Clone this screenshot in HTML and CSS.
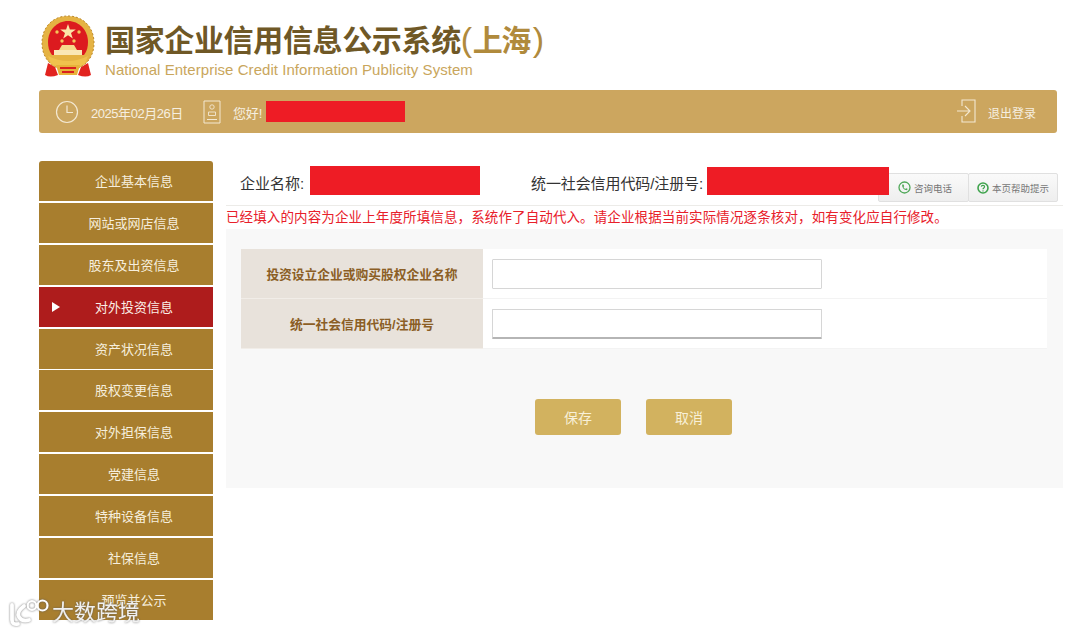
FILE: index.html
```html
<!DOCTYPE html>
<html lang="zh-CN">
<head>
<meta charset="utf-8">
<title>国家企业信用信息公示系统(上海)</title>
<link rel="stylesheet" href="styles.css">
</head>
<body>
<header class="brand">
  <svg class="emblem" width="54" height="64" viewBox="0 0 54 64" aria-hidden="true">
    <path d="M7 48 L4 60 Q9 63 17 60 L14 52Z M47 48 L50 60 Q45 63 37 60 L40 52Z" fill="#e2231f"/>
    <path d="M27 1 C42 1 53 12 53 28 C53 44 42 55 27 55 C12 55 1 44 1 28 C1 12 12 1 27 1Z" fill="#e5b343"/>
    <path d="M27 1 C42 1 53 12 53 28 C53 44 42 55 27 55 C12 55 1 44 1 28 C1 12 12 1 27 1Z" fill="none" stroke="#bd8a2c" stroke-width="1" stroke-dasharray="2 2"/>
    <path d="M27 6 C38 6 47 15 47 27 C47 32 46 36 43 40 H11 C8 36 7 32 7 27 C7 15 16 6 27 6Z" fill="#dc1a1f"/>
    <polygon points="27,9 28.900,14.600 34.800,14.600 30,18 31.800,23.600 27,20.200 22.200,23.600 24,18 19.200,14.600 25.100,14.600" fill="#fbe6a8"/>
    <circle cx="16" cy="17" r="1.700" fill="#f4c65a"/>
    <circle cx="38" cy="17" r="1.700" fill="#f4c65a"/>
    <circle cx="21" cy="26" r="1.700" fill="#f4c65a"/>
    <circle cx="33" cy="26" r="1.700" fill="#f4c65a"/>
    <path d="M18 35 L21 30 H33 L36 35Z" fill="#f6d98a"/>
    <rect x="13" y="35" width="28" height="5" fill="#fae7b5"/>
    <path d="M7 41 Q27 51 47 41 L44 49 Q27 58 10 49Z" fill="#f0c24d"/>
    <path d="M15 50 H39 L36 60 H18Z" fill="#e8b23a"/>
    <path d="M19 53 H35 M21 57 H33" stroke="#d9201f" stroke-width="2"/>
  </svg>
  <div class="brand-text">
    <h1 class="brand-title">国家企业信用信息公示系统<span class="brand-region"><span class="paren paren-open">(</span><span class="region-name">上海</span><span class="paren paren-close">)</span></span></h1>
    <p class="brand-en">National Enterprise Credit Information Publicity System</p>
  </div>
</header>

<div class="topbar">
  <div class="topbar-left">
    <svg class="icon-clock" width="24" height="24" viewBox="0 0 24 24" aria-hidden="true">
      <circle cx="12" cy="12" r="10.500" fill="none" stroke="#f3e8d2" stroke-width="1.200"/>
      <path d="M12 5.500V12.500H18" fill="none" stroke="#f3e8d2" stroke-width="1.200"/>
    </svg>
    <span class="date">2025年02月26日</span>
    <svg class="icon-user" width="18" height="24" viewBox="0 0 18 24" aria-hidden="true">
      <path d="M1 1H17V23H1Z M4 19.500H14" fill="none" stroke="#f3e8d2" stroke-width="1"/>
      <circle cx="9" cy="7" r="2.200" fill="none" stroke="#f3e8d2" stroke-width=".9"/>
      <path d="M5.500 15.500V12H12.500V15.500Z" fill="none" stroke="#f3e8d2" stroke-width=".9"/>
    </svg>
    <span class="hello">您好!</span>
    <span class="redact redact-user"></span>
  </div>
  <div class="logout">
    <svg width="20" height="24" viewBox="0 0 20 24" aria-hidden="true">
      <path d="M5 7V1H18V23H5V17" fill="none" stroke="#f3e8d2" stroke-width="1.100"/>
      <path d="M0 12H12M8 7L13 12L8 17" fill="none" stroke="#f3e8d2" stroke-width="1.100"/>
    </svg>
    <span>退出登录</span>
  </div>
</div>

<div class="layout">
  <nav class="sidebar">
    <a class="nav-item first">企业基本信息</a>
    <a class="nav-item">网站或网店信息</a>
    <a class="nav-item">股东及出资信息</a>
    <a class="nav-item active">对外投资信息</a>
    <a class="nav-item">资产状况信息</a>
    <a class="nav-item">股权变更信息</a>
    <a class="nav-item">对外担保信息</a>
    <a class="nav-item">党建信息</a>
    <a class="nav-item">特种设备信息</a>
    <a class="nav-item">社保信息</a>
    <a class="nav-item">预览并公示</a>
  </nav>

  <main class="content">
    <div class="company-row">
      <span class="label label-name">企业名称:</span>
      <span class="redact redact-name"></span>
      <span class="label label-code">统一社会信用代码/注册号:</span>
      <span class="redact redact-code"></span>
      <div class="help-tabs">
        <span class="help-tab tab-phone">
          <svg width="13" height="13" viewBox="0 0 13 13" aria-hidden="true">
            <circle cx="6.500" cy="6.500" r="5.500" fill="none" stroke="#4fa858" stroke-width="1.300"/>
            <path d="M4.200 3.500C3.800 6.500 6 9.200 9.200 9.200L9.500 7.800L8 7.200L7.300 7.900C6.500 7.500 5.800 6.700 5.500 5.900L6.200 5.200L5.600 3.500Z" fill="#4fa858"/>
          </svg>咨询电话</span>
        <span class="help-tab tab-help">
          <svg width="12" height="12" viewBox="0 0 12 12" aria-hidden="true">
            <circle cx="6" cy="6" r="5" fill="none" stroke="#3fa34d" stroke-width="1.600"/>
            <path d="M4.300 4.600C4.500 3 7.600 3 7.600 4.800C7.600 6 6 5.900 6 7.200" fill="none" stroke="#3fa34d" stroke-width="1.200"/>
            <circle cx="6" cy="8.900" r=".7" fill="#3fa34d"/>
          </svg>本页帮助提示</span>
      </div>
    </div>
    <p class="notice">已经填入的内容为企业上年度所填信息，系统作了自动代入。请企业根据当前实际情况逐条核对，如有变化应自行修改。</p>

    <section class="panel">
      <div class="form-table">
        <div class="form-label">投资设立企业或购买股权企业名称</div>
        <div class="form-cell"><input class="text-input" type="text"></div>
        <div class="form-label">统一社会信用代码/注册号</div>
        <div class="form-cell"><input class="text-input input-shadow" type="text"></div>
      </div>
      <div class="actions">
        <button class="btn" type="button">保存</button>
        <button class="btn" type="button">取消</button>
      </div>
    </section>
  </main>
</div>

<div class="watermark">
  <svg class="wm-logo" width="42" height="28" viewBox="0 0 42 28" aria-hidden="true">
    <path d="M3 6V21Q3 26 9 25" fill="none" stroke="#fff" stroke-width="3.800" stroke-linecap="round"/>
    <path d="M15 7Q7 13 10 18Q13 23 20 21" fill="none" stroke="#fff" stroke-width="3.800" stroke-linecap="round"/>
    <circle cx="23" cy="6.500" r="4.300" fill="none" stroke="#fff" stroke-width="2.200"/>
    <circle cx="33.500" cy="6.500" r="5" fill="none" stroke="#fff" stroke-width="2.200"/>
  </svg>
  <span class="wm-text">大数跨境</span>
</div>
</body>
</html>
```
FILE: styles.css
```css
* { box-sizing: border-box; }
html, body { margin: 0; padding: 0; }
body {
  width: 1080px;
  height: 633px;
  overflow: hidden;
  background: #fff;
  position: relative;
  font-family: "Liberation Sans", "Noto Sans CJK SC", sans-serif;
}

.brand {
  height: 90px;
  padding: 15px 0 0 41px;
  display: flex;
  align-items: flex-start;
  gap: 10px;
}
.emblem { flex: none; }
.brand-text { padding-top: 8px; }
.brand-title {
  margin: 0;
  font-size: 30px;
  line-height: 36px;
  font-weight: 700;
  color: #6f5826;
  letter-spacing: -.35px;
  white-space: nowrap;
}
.brand-region { color: #b08a3c; }
.paren { font-weight: 400; font-size: 34px; line-height: 30px; }
.paren-open { margin-right: 1px; }
.paren-close { margin-left: 3px; }
.region-name { letter-spacing: -1.500px; }
.brand-en {
  margin: 2px 0 0;
  font-size: 15px;
  line-height: 17px;
  color: #c9a65c;
  letter-spacing: .05px;
  white-space: nowrap;
}

.topbar {
  margin: 0 23px 0 39px;
  height: 43px;
  background: #cca65f;
  border-radius: 3px;
  display: flex;
  justify-content: space-between;
  align-items: center;
  color: #f6efe0;
  font-size: 12px;
}
.topbar-left { display: flex; align-items: center; padding-left: 16px; }
.date { margin: 2px 0 0 12px; font-size: 13px; letter-spacing: -.45px; }
.icon-user { margin-left: 20px; }
.hello { margin: 2px 0 0 12px; font-size: 13px; letter-spacing: -.1px; }
.redact { display: block; background: #ee1c25; flex: none; }
.redact-user { width: 139px; height: 21px; margin-left: 4px; }
.logout { display: flex; align-items: center; gap: 11px; padding-right: 21px; }
.logout svg { margin-top: -1px; }
.logout span { margin-top: 1px; }

.layout {
  display: flex;
  align-items: flex-start;
  padding: 28px 17px 0 39px;
  gap: 13px;
}
.sidebar { width: 174px; flex: none; display: flex; flex-direction: column; gap: 1.9px; }
.nav-item {
  height: 40px;
  background: #a87e2e;
  color: #f6eedd;
  font-size: 13px;
  line-height: 41px;
  padding-left: 16px;
  text-align: center;
  position: relative;
}
.nav-item.first { border-radius: 3px 3px 0 0; }
.nav-item.active { background: #ae1c1c; color: #fbeee6; }
.nav-item.active::before {
  content: "";
  position: absolute;
  left: 13px;
  top: 15px;
  border-left: 8px solid #fff;
  border-top: 5px solid transparent;
  border-bottom: 5px solid transparent;
}

.content { width: 837px; flex: none; }
.company-row {
  display: flex;
  align-items: flex-start;
  height: 40px;
  border-bottom: 1px solid #ecebe8;
  padding-left: 14px;
  margin-top: 5px;
  position: relative;
  color: #333;
  font-size: 15px;
}
.label { line-height: 32px; white-space: nowrap; margin-top: 2px; }
.label-name { width: 70px; }
.redact-name { width: 170px; height: 29px; }
.label-code { margin-left: 51px; width: 176px; letter-spacing: -.1px; }
.redact-code { width: 182px; height: 28px; margin-top: 1px; position: relative; z-index: 1; }
.help-tabs { position: absolute; right: 5px; top: 7px; display: flex; }
.help-tab {
  height: 29px;
  display: flex;
  align-items: center;
  justify-content: center;
  gap: 3px;
  font-size: 9.500px;
  color: #777;
  background: linear-gradient(#fafafa, #eeeeee);
  border: 1px solid #e0e0e0;
  border-radius: 2px;
  white-space: nowrap;
}
.tab-phone { width: 91px; padding-left: 3px; }
.tab-help { width: 90px; margin-left: -1px; }
.notice {
  margin: 0;
  height: 23px;
  line-height: 23px;
  font-size: 13.500px;
  color: #e8202a;
  white-space: nowrap;
  letter-spacing: .12px;
}

.panel {
  background: #f8f8f8;
  height: 259px;
  padding: 20px 16px 0 15px;
}
.form-table {
  display: grid;
  grid-template-columns: 242px 1fr;
  grid-auto-rows: 50px;
  background: #fff;
}
.form-label {
  background: #e8e2db;
  color: #8b5e25;
  font-size: 12.750px;
  font-weight: 700;
  display: flex;
  align-items: center;
  justify-content: center;
  border-bottom: 1px solid #f1ede8;
}
.form-cell {
  padding-left: 9px;
  display: flex;
  align-items: center;
  border-bottom: 1px solid #f3f3f3;
}
.text-input {
  width: 330px;
  height: 30px;
  margin: 0;
  padding: 0;
  border: 1px solid #d6d6d6;
  background: #fff;
  border-radius: 1px;
}
.input-shadow { border-bottom: 2px solid #b5b5b5; }

.actions { display: flex; justify-content: flex-start; gap: 25px; padding: 50px 0 0 294px; }
.btn {
  width: 86px;
  height: 36px;
  padding: 0;
  border: 0;
  border-radius: 3px;
  background: #d2b25f;
  color: #f8f0d8;
  font: 14px "Liberation Sans", "Noto Sans CJK SC", sans-serif;
}

.watermark {
  position: absolute;
  left: 9px;
  top: 599px;
  display: flex;
  align-items: flex-end;
  filter: drop-shadow(0 0 1px rgba(90,90,90,.8));
}
.wm-logo { flex: none; }
.wm-text {
  color: #f0f0f0;
  font-size: 22px;
  line-height: 28px;
  margin-left: 1px;
}
```
